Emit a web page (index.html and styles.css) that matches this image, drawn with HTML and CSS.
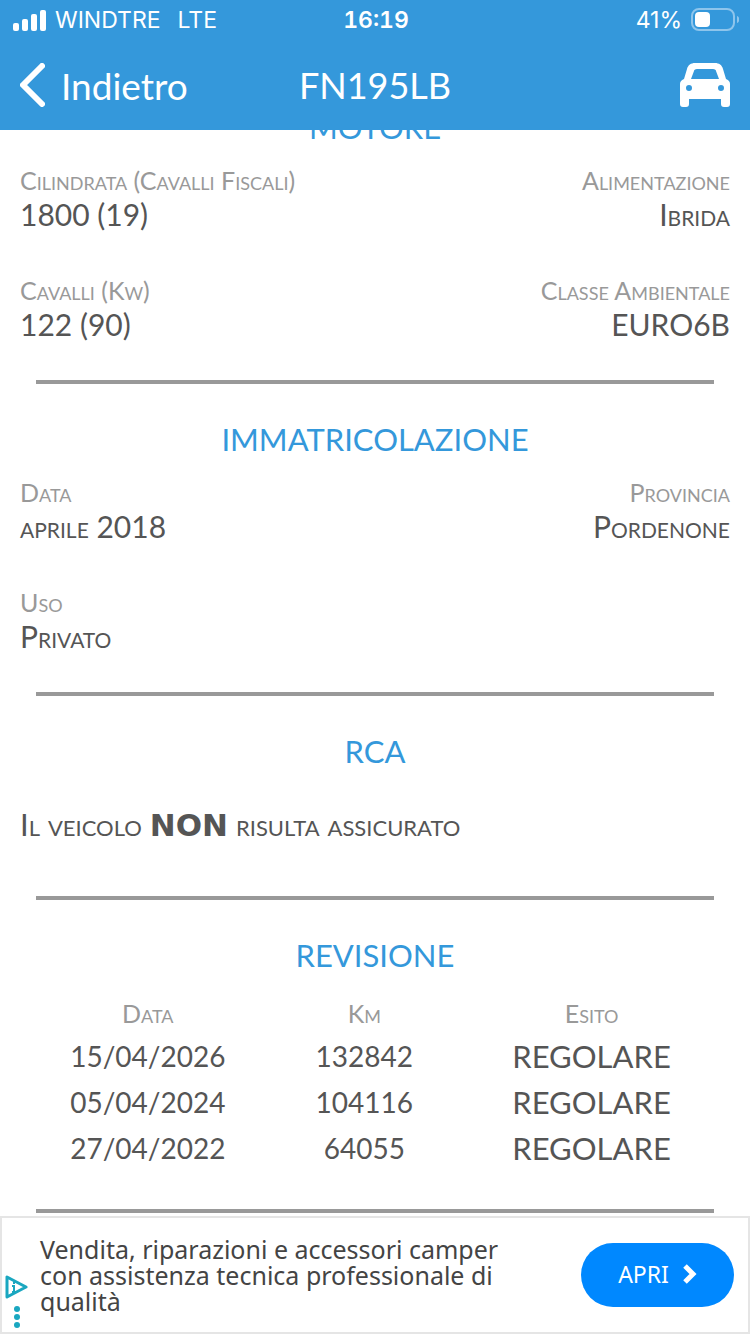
FILE: index.html
```html
<!DOCTYPE html>
<html lang="it">
<head>
  <meta charset="UTF-8">
  <title>FN195LB</title>
  <meta name="viewport" content="width=device-width, initial-scale=1">
  <link rel="stylesheet" href="styles.css">
</head>
<body>

  <!-- Header -->
  <header class="header">
    <div class="status-bar">
      <div class="status-left">
        <svg class="signal" viewBox="0 0 33 21" width="33" height="21" fill="#fff">
          <rect x="0" y="13" width="6" height="8" rx="2"/>
          <rect x="9" y="9" width="6" height="12" rx="2"/>
          <rect x="18" y="4" width="6" height="17" rx="2"/>
          <rect x="27" y="0" width="6" height="21" rx="2"/>
        </svg>
        <span>WINDTRE</span>
        <span class="network">LTE</span>
      </div>
      <span class="time">16:19</span>
      <div class="status-right">
        <span>41%</span>
        <svg viewBox="0 0 48 24" width="48" height="24">
          <rect x="1" y="1" width="42" height="21" rx="7" fill="none" stroke="#8ec5ec" stroke-width="2"/>
          <rect x="4" y="4" width="15" height="15" rx="4" fill="#fff"/>
          <path d="M46 8c3 1 3 6 0 7z" fill="#8ec5ec"/>
        </svg>
      </div>
    </div>
    <nav class="nav-bar">
      <a class="back" href="#">
        <svg viewBox="0 0 25 44" width="25" height="44">
          <path d="M22 3L3 22l19 19" fill="none" stroke="#fff" stroke-width="6" stroke-linecap="round" stroke-linejoin="round"/>
        </svg>
        Indietro
      </a>
      <h1>FN195LB</h1>
      <button class="car-btn" type="button" aria-label="Veicolo">
        <svg viewBox="0 0 50 44" width="50" height="44">
          <path fill="#fff" fill-rule="evenodd" d="M15 0h20c4 0 7 2 8 6l3 10c3 1 4 3 4 5v20c0 2-1 3-3 3h-3c-2 0-3-1-3-3v-5H9v5c0 2-1 3-3 3H3c-2 0-3-1-3-3V21c0-2 1-4 4-5L7 6c1-4 4-6 8-6zM17 6c-2 0-3 1-3 2l-3 8h28l-3-8c0-1-1-2-3-2zM9 22a3 3 0 1 0 0 6 3 3 0 0 0 0-6zM41 22a3 3 0 1 0 0 6 3 3 0 0 0 0-6z"/>
        </svg>
      </button>
    </nav>
  </header>

  <main>
    <!-- Motore -->
    <section>
      <h2>MOTORE</h2>
      <dl class="fields">
        <div><dt>Cilindrata (Cavalli Fiscali)</dt><dd>1800 (19)</dd></div>
        <div><dt>Alimentazione</dt><dd>Ibrida</dd></div>
        <div><dt>Cavalli (Kw)</dt><dd>122 (90)</dd></div>
        <div><dt>Classe Ambientale</dt><dd>EURO6B</dd></div>
      </dl>
    </section>

    <!-- Immatricolazione -->
    <section>
      <h2>IMMATRICOLAZIONE</h2>
      <dl class="fields">
        <div><dt>Data</dt><dd>aprile 2018</dd></div>
        <div><dt>Provincia</dt><dd>Pordenone</dd></div>
        <div><dt>Uso</dt><dd>Privato</dd></div>
      </dl>
    </section>

    <!-- RCA -->
    <section>
      <h2>RCA</h2>
      <p class="insurance">Il veicolo <strong>NON</strong> risulta assicurato</p>
    </section>

    <!-- Revisione -->
    <section>
      <h2>REVISIONE</h2>
      <table class="checks">
        <thead>
          <tr><th>Data</th><th>Km</th><th>Esito</th></tr>
        </thead>
        <tbody>
          <tr><td>15/04/2026</td><td>132842</td><td class="result">REGOLARE</td></tr>
          <tr><td>05/04/2024</td><td>104116</td><td class="result">REGOLARE</td></tr>
          <tr><td>27/04/2022</td><td>64055</td><td class="result">REGOLARE</td></tr>
        </tbody>
      </table>
    </section>
  </main>

  <!-- Ad banner -->
  <aside class="ad">
    <div class="ad-info">
      <svg viewBox="0 0 24 24" width="24" height="24">
        <path d="M2 2v20L21 12z" fill="none" stroke="#1aa7c0" stroke-width="3" stroke-linejoin="round"/>
        <path d="M9 7v2M7 11h2v6M7 17h5" fill="none" stroke="#1aa7c0" stroke-width="2"/>
      </svg>
      <svg viewBox="0 0 6 22" width="6" height="22" fill="#1aa7c0">
        <circle cx="3" cy="3" r="3"/>
        <circle cx="3" cy="11" r="3"/>
        <circle cx="3" cy="19" r="3"/>
      </svg>
    </div>
    <p>Vendita, riparazioni e accessori camper con assistenza tecnica professionale di qualità</p>
    <a class="ad-btn" href="#">
      APRI
      <svg viewBox="0 0 14 20" width="14" height="20">
        <path d="M2 2l8 8-8 8" fill="none" stroke="#fff" stroke-width="5"/>
      </svg>
    </a>
  </aside>

</body>
</html>
```
FILE: styles.css
```css
* { box-sizing: border-box; }
body { margin: 0; background: #fff; color: #555; font-family: "Gill Sans", Lato, sans-serif; }
h1, h2, p, dl, dd { margin: 0; font-weight: 400; }
a { color: inherit; text-decoration: none; }
svg { display: block; flex: none; }

/* Header */
.header {
  position: fixed; top: 0; left: 0; width: 100%; height: 130px; z-index: 1;
  background: #3498db; color: #fff;
}
.status-bar, .nav-bar { display: grid; grid-template-columns: 1fr auto 1fr; align-items: center; }
.status-bar { height: 40px; padding: 0 11px 0 13px; font-family: Inter, sans-serif; font-size: 23px; }
.status-left, .status-right { display: flex; align-items: center; gap: 9px; }
.status-right { justify-content: flex-end; }
.network { margin-left: 8px; }
.time { font-size: 23px; font-weight: 600; font-variant-numeric: tabular-nums; }
.nav-bar { height: 90px; padding: 0 20px; font-size: 37px; }
.nav-bar h1 { font-size: 36px; }
.back { display: flex; align-items: center; gap: 16px; }
.car-btn { justify-self: end; padding: 0; border: none; background: none; cursor: pointer; }

/* Sections */
main { padding: 107px 0 118px; }
section { padding: 0 20px 35px; }
section:last-child { padding-bottom: 0; }
section::after {
  content: ""; display: block; height: 4px; margin: 38px 16px 0; background: #999;
}
h2 { margin-bottom: 17px; font-size: 31px; line-height: 40px; text-align: center; color: #3498db; }

/* Fields */
.fields { display: grid; grid-template-columns: auto auto; row-gap: 42px; }
.fields div:nth-child(even) { text-align: right; }
dt, dd, th, .insurance { font-variant: small-caps; }
dt { font-size: 25px; line-height: 32px; color: #999; }
dd { font-size: 30px; line-height: 36px; }
.insurance { padding: 18px 0 15px; font-size: 31px; line-height: 36px; }
.insurance strong { font-family: "DejaVu Sans", sans-serif; font-weight: 700; }

/* Revisione */
.checks { width: 100%; table-layout: fixed; border-collapse: collapse; text-align: center; font-size: 28px; }
.checks th { width: 36%; padding: 5px 0 4px; font-size: 25px; font-weight: 400; line-height: 32px; color: #999; }
.checks th:nth-child(2) { width: 25%; }
.checks th:nth-child(3) { width: 39%; }
.checks td { padding: 0; line-height: 46px; }
.checks .result { font-size: 31px; }

/* Ad */
.ad {
  position: fixed; bottom: 0; left: 0; width: 100%; height: 118px; z-index: 1;
  display: flex; align-items: center; padding: 0 14px 0 3px;
  background: #fff; border: 2px solid #e5e5e5;
  font-family: "Noto Sans", sans-serif; color: #444;
}
.ad-info { display: flex; flex-direction: column; align-items: center; align-self: flex-end; gap: 7px; padding-bottom: 4px; }
.ad p { flex: 1; margin: 0 64px 0 11px; font-size: 25px; line-height: 26px; }
.ad-btn {
  display: flex; align-items: center; justify-content: center; gap: 14px;
  width: 153px; height: 64px; padding-bottom: 2px; border-radius: 32px; background: #08f; color: #fff; font-size: 23px;
}
```
